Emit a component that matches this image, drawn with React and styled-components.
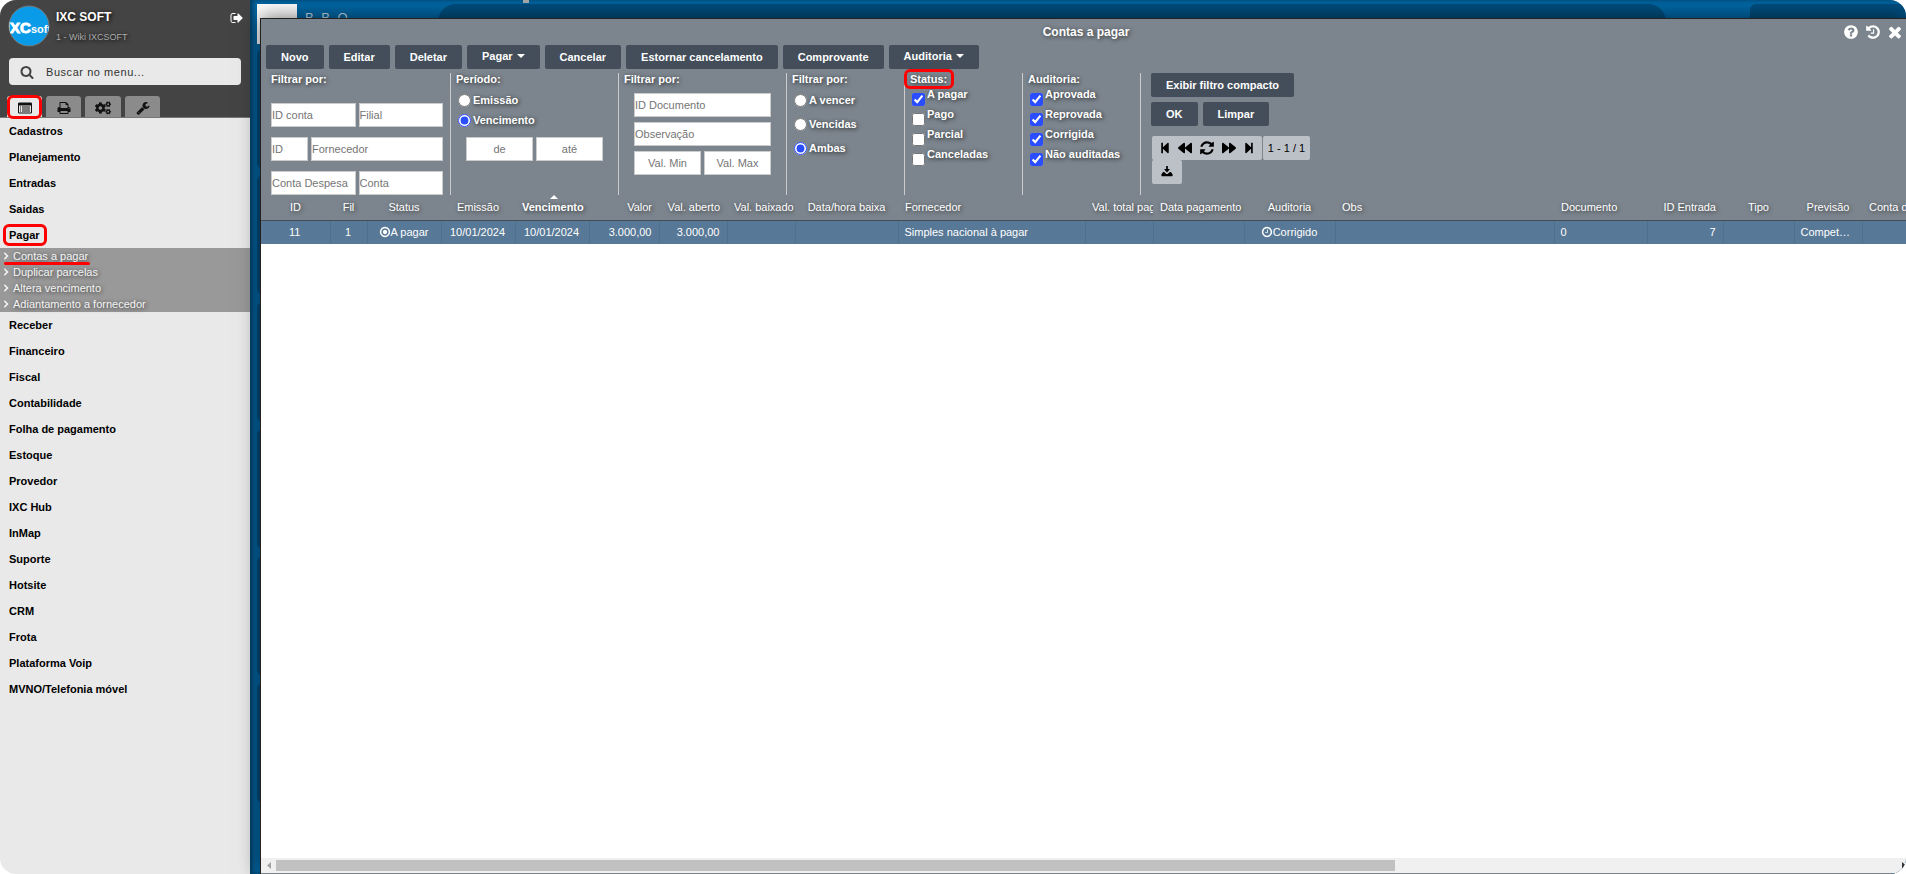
import { useState } from "react";
import styled, { createGlobalStyle, css } from "styled-components";
import { FaCogs, FaStepBackward, FaBackward, FaForward, FaStepForward } from "react-icons/fa";

const GlobalStyle = createGlobalStyle`
  * {
    box-sizing: border-box;
  }
  body {
    margin: 0;
    background: #fff;
  }
  body, button, input, table {
    font-family: "Liberation Sans", Arial, sans-serif;
    font-size: 11px;
  }
  button {
    border: none;
    padding: 0;
    cursor: pointer;
  }
`;

const Page = styled.div`
  display: flex;
  height: 100vh;
  border-radius: 16px;
  overflow: hidden;
`;

/* sidebar */
const Sidebar = styled.aside`
  flex: 0 0 250px;
  background: #e9e9e9;
`;
const SideHead = styled.header`
  background: #444;
  border-bottom: 1px solid #777;
`;
const User = styled.div`
  display: flex;
  height: 58px;
  padding: 5px 6px 0 8px;
  gap: 6px;
`;
const UserText = styled.div`
  flex: 1;
  padding-top: 5px;
`;
const Company = styled.div`
  color: #fff;
  font-size: 12px;
  font-weight: 700;
  line-height: 15px;
  text-shadow: 1px 1px 4px #000;
`;
const Branch = styled.div`
  padding-top: 6px;
  color: #aaa;
  font-size: 9px;
  line-height: 12px;
  text-shadow: 1px 1px 4px #000;
`;
const LogOut = styled.button`
  align-self: flex-start;
  height: 28px;
  background: none;
  color: #fff;
`;
const Search = styled.label`
  display: flex;
  align-items: center;
  gap: 10px;
  height: 27px;
  margin: 0 9px;
  padding: 0 12px 0 11px;
  border-radius: 4px;
  background: #e9e9e9;
  color: #444;
  input {
    flex: 1;
    min-width: 0;
    border: none;
    outline: none;
    background: none;
    letter-spacing: 0.05em;
  }
  input::placeholder {
    color: #333;
  }
`;
const Tabs = styled.nav`
  display: flex;
  gap: 4px;
  padding: 11px 7px 0;
`;
const Tab = styled.button`
  position: relative;
  display: flex;
  align-items: center;
  justify-content: center;
  min-width: 35px;
  height: 21px;
  padding: 2px 10px 0;
  border-radius: 3px 3px 0 0;
  background: ${({ $active }) => ($active ? "#e9e9e9" : "#8b8b8b")};
  color: #111;
`;
const Menu = styled.ul`
  margin: 0;
  padding: 0;
  list-style: none;
`;
const MenuLink = styled.a`
  display: flex;
  align-items: center;
  height: 26px;
  padding-left: 9px;
  color: #000;
  font-weight: 700;
  text-decoration: none;
`;
const SubMenu = styled.ul`
  margin: 0;
  padding: 0;
  list-style: none;
  background: #999;
`;
const SubLink = styled.a`
  display: flex;
  align-items: center;
  gap: 2px;
  height: 16px;
  padding-left: 1px;
  color: #f4f4f4;
  text-decoration: none;
  text-shadow: 1px 1px 4px #333;
`;
const Marked = styled.span`
  position: relative;
`;
/* red outline that sits over a menu entry, a tab or a label */
const Mark = styled.i`
  position: absolute;
  inset: ${({ $inset }) => $inset};
  border: 3px solid #f00;
  border-radius: 6px;
  pointer-events: none;
`;
const Underline = styled.i`
  position: absolute;
  left: -9px;
  right: -2px;
  bottom: -3px;
  height: 3px;
  border-radius: 2px;
  background: #f00;
`;

/* desktop behind the window */
const Desktop = styled.main`
  position: relative;
  display: flex;
  flex: 1;
  min-width: 0;
  padding: 18px 0 0 10px;
`;
const Backdrop = styled.div`
  position: absolute;
  inset: 0;
  overflow: hidden;
  background: #0067a5;
  box-shadow: inset 3px 0 4px rgba(0, 0, 0, 0.4);
`;
const Piece = styled.div`
  position: absolute;
  left: ${({ $left }) => $left}px;
  top: ${({ $top }) => $top}px;
  right: ${({ $right }) => ($right === undefined ? "auto" : `${$right}px`)};
  width: ${({ $width }) => ($width ? `${$width}px` : "auto")};
  height: ${({ $height }) => $height}px;
  border-radius: ${({ $radius = 0 }) => $radius}px;
  background: ${({ $color = "rgba(0, 20, 40, 0.3)" }) => $color};
`;
const BackText = styled.div`
  position: absolute;
  left: 55px;
  top: 10px;
  color: #c8dcea;
  font-size: 13px;
  letter-spacing: 2px;
`;

const Window = styled.section`
  position: relative;
  display: flex;
  flex: 1;
  flex-direction: column;
  min-width: 0;
  border: 1px solid #222;
  border-width: 1px 0 0 1px;
  background: #7c858e;
  box-shadow: 0 0 20px rgba(0, 0, 0, 0.6);
`;
const TitleBar = styled.div`
  display: grid;
  grid-template-columns: 1fr auto 1fr;
  align-items: center;
  height: 26px;
  padding-left: 5px;
  color: #fff;
`;
const Title = styled.h1`
  grid-column: 2;
  margin: 0;
  font-size: 12px;
  text-shadow: 1px 1px 4px #333;
`;
const WindowTools = styled.div`
  display: flex;
  justify-content: flex-end;
`;
const WindowTool = styled.button`
  display: flex;
  align-items: center;
  justify-content: center;
  width: 22px;
  height: 24px;
  background: none;
  color: #fff;
`;
const Toolbar = styled.div`
  display: flex;
  gap: 5px;
  padding: 0 5px;
`;
const Button = styled.button`
  display: flex;
  align-items: center;
  height: 24px;
  padding: 0 15px;
  border-radius: 2px;
  background: #434e5a;
  color: #fff;
  font-weight: 700;
  white-space: nowrap;
  ${({ $menu }) =>
    $menu &&
    css`
      gap: 4px;
      padding-bottom: 2px;
      &::after {
        content: "";
        border: 4px solid transparent;
        border-top-color: #fff;
        border-bottom: none;
      }
    `}
`;

/* filters */
const Filters = styled.div`
  display: flex;
  height: 122px;
  margin-top: 4px;
  color: #fff;
  font-weight: 700;
`;
const Group = styled.fieldset`
  flex: 0 0 ${({ $width }) => $width}px;
  min-width: 0;
  margin: 0;
  padding: 0 7px 0 ${({ $pad = 5 }) => $pad}px;
  border: none;
  border-right: 1px solid #ccc;
`;
const Heading = styled.div`
  width: max-content;
  line-height: 12px;
  text-shadow: 1px 1px 4px #222;
`;
const Fields = styled.div`
  display: flex;
  flex-direction: column;
  gap: ${({ $gap = 5 }) => $gap}px;
  padding: ${({ $top }) => $top}px 8px 0 10px;
  ${({ $wide }) => $wide && "padding-left: 0; padding-right: 0;"}
`;
const FieldRow = styled.div`
  display: grid;
  grid-template-columns: ${({ $cols = "1fr 1fr" }) => $cols};
  gap: 3px;
`;
const Field = styled.input`
  width: 100%;
  min-width: 0;
  height: 24px;
  padding: 0;
  border: 1px solid #ccc;
  background: #fff;
  text-align: ${({ $center }) => ($center ? "center" : "left")};
  &::placeholder {
    color: #757575;
  }
`;
const Options = styled.div`
  padding-top: ${({ $top }) => $top}px;
`;
const Option = styled.label`
  display: flex;
  align-items: ${({ $box }) => ($box ? "flex-end" : "center")};
  gap: 2px;
  height: ${({ $height = 20 }) => $height}px;
  padding: 0 0 ${({ $box }) => ($box ? 1 : 0)}px 2px;
  text-shadow: 1px 1px 4px #222;
  input {
    flex: none;
    width: 13px;
    height: 13px;
    margin: 0;
    accent-color: #2a4dff;
  }
  span {
    align-self: ${({ $box }) => ($box ? "flex-start" : "center")};
    line-height: 14px;
  }
`;
const Actions = styled.div`
  padding-left: 10px;
`;
const ActionRow = styled.div`
  display: flex;
  gap: 5px;
  margin-bottom: 5px;
`;
const Pager = styled.div`
  display: grid;
  grid-template-columns: 110px 47px;
  column-gap: 1px;
  width: max-content;
  padding: 5px 1px 0;
  color: #000;
  font-weight: 400;
`;
const PagerPart = styled.div`
  display: flex;
  align-items: center;
  justify-content: center;
  gap: 7px;
  width: ${({ $width }) => ($width ? `${$width}px` : "auto")};
  height: 24px;
  border-radius: 2px;
  background: #bcc1c8;
  button {
    display: flex;
    background: none;
    color: #000;
  }
`;

/* grid */
const GridArea = styled.div`
  flex: 1;
  min-height: 0;
  overflow: hidden;
  background: #fff;
`;
const Table = styled.table`
  width: 2375px;
  table-layout: fixed;
  border-collapse: collapse;
`;
const HeadCell = styled.th`
  position: relative;
  height: 25px;
  padding: 0 7px;
  overflow: hidden;
  border-bottom: 1px solid #434e5a;
  background: #7c858e;
  color: #fff;
  font-weight: ${({ $sorted }) => ($sorted ? 700 : 400)};
  text-align: ${({ $align }) => $align};
  text-shadow: 1px 1px 4px #333;
  white-space: nowrap;
  ${({ $sorted }) =>
    $sorted &&
    css`
      &::before {
        content: "";
        position: absolute;
        top: 0;
        left: calc(50% - 2px);
        border: 4px solid transparent;
        border-top: none;
        border-bottom-color: #fff;
      }
    `}
`;
const Cell = styled.td`
  height: 24px;
  padding: 0 7px 0 6px;
  overflow: hidden;
  border-right: 1px solid #4f6f8b;
  background: #577896;
  color: #fff;
  text-align: ${({ $align }) => $align};
  text-overflow: ellipsis;
  white-space: nowrap;
  svg {
    vertical-align: -2px;
  }
`;
const ScrollBar = styled.div`
  display: flex;
  align-items: center;
  height: 15px;
  margin-bottom: 1px;
  background: #f0f0f0;
`;
const ScrollArrow = styled.span`
  display: flex;
  flex: 0 0 15px;
  justify-content: ${({ $end }) => ($end ? "flex-end" : "center")};
  color: ${({ $end }) => ($end ? "#333" : "#a3a3a3")};
`;
const ScrollTrack = styled.div`
  flex: 1;
`;
const ScrollThumb = styled.div`
  width: calc(100% * 0.693);
  height: 11px;
  background: #c1c1c1;
`;

const ring =
  "q0 209-103 385.5t-279.5 279.5-385.5 103-385.5-103-279.5-279.5-103-385.5 103-385.5 279.5-279.5 385.5-103 385.5 103 279.5 279.5 103 385.5z";
const paths = {
  signOut:
    "M704 1440q0 4 1 20t.5 26.5-3 23.5-10 19.5-20.5 6.5h-320q-119 0-203.5-84.5t-84.5-203.5v-704q0-119 84.5-203.5t203.5-84.5h320q13 0 22.5 9.5t9.5 22.5q0 4 1 20t.5 26.5-3 23.5-10 19.5-20.5 6.5h-320q-66 0-113 47t-47 113v704q0 66 47 113t113 47h312l11.5 1 11.5 3 8 5.5 7 9 2 13.5zm928-544q0 26-19 45l-544 544q-19 19-45 19t-45-19-19-45v-288h-448q-26 0-45-19t-19-45v-384q0-26 19-45t45-19h448v-288q0-26 19-45t45-19 45 19l544 544q19 19 19 45z",
  search:
    "M1216 832q0-185-131.5-316.5t-316.5-131.5-316.5 131.5-131.5 316.5 131.5 316.5 316.5 131.5 316.5-131.5 131.5-316.5zm512 832q0 52-38 90t-90 38q-54 0-90-38l-343-342q-179 124-399 124-143 0-273.5-55.5t-225-150-150-225-55.5-273.5 55.5-273.5 150-225 225-150 273.5-55.5 273.5 55.5 225 150 150 225 55.5 273.5q0 220-124 399l343 343q37 37 37 90z",
  list: "M160 192h1472q160 0 160 160v1088q0 160-160 160H160q-160 0-160-160V352q0-160 160-160zM128 576v832q0 64 64 64h1408q64 0 64-64V576zM256 704h128v128H256zM512 704h1024v128H512zM256 960h128v128H256zM512 960h1024v128H512zM256 1216h128v128H256zM512 1216h1024v128H512z",
  print:
    "M448 1536h896v-256h-896v256zm0-640h896v-384h-160q-40 0-68-28t-28-68v-160h-640v640zm1152 64q0-26-19-45t-45-19-45 19-19 45 19 45 45 19 45-19 19-45zm128 0v416q0 13-9.5 22.5t-22.5 9.5h-224v160q0 40-28 68t-68 28h-960q-40 0-68-28t-28-68v-160h-224q-13 0-22.5-9.5t-9.5-22.5v-416q0-79 56.5-135.5t135.5-56.5h64v-544q0-40 28-68t68-28h672q40 0 88 20t76 48l152 152q28 28 48 76t20 88v256h64q79 0 135.5 56.5t56.5 135.5z",
  wrench:
    "M448 1472q0-26-19-45t-45-19-45 19-19 45 19 45 45 19 45-19 19-45zm644-420l-682 682q-37 37-90 37-52 0-91-37l-106-108q-38-36-38-90 0-53 38-91l681-681q39 98 114.5 173.5t173.5 114.5zm634-435q0 39-23 106-47 134-164.5 217.5t-258.5 83.5q-185 0-316.5-131.5t-131.5-316.5 131.5-316.5 316.5-131.5q58 0 121.5 16.5t107.5 46.5q16 11 16 28t-16 28l-293 169v224l193 107q5-3 79-48.5t135.5-81 70.5-35.5q15 0 23.5 10t8.5 25z",
  help:
    "M1024 1376v-192q0-14-9-23t-23-9h-192q-14 0-23 9t-9 23v192q0 14 9 23t23 9h192q14 0 23-9t9-23zm256-672q0-88-55.5-163t-138.5-116-170-41q-243 0-371 213-15 24 8 42l132 100q7 6 19 6 16 0 25-12 53-68 86-92 34-24 86-24 48 0 85.5 26t37.5 59q0 38-20 61t-68 45q-63 28-115.5 86.5t-52.5 125.5v36q0 14 9 23t23 9h192q14 0 23-9t9-23q0-19 21.5-49.5t54.5-49.5q32-18 49-28.5t46-35 44.5-48 28-60.5 12.5-81zm384 192" +
    ring,
  history:
    "M1664 896q0 156-61 298t-164 245-245 164-298 61q-172 0-327-72.5t-264-204.5q-7-10-6.5-22.5t8.5-20.5l137-138q10-9 25-9 16 2 23 12 73 95 179 147t225 52q104 0 198.5-40.5t163.5-109.5 109.5-163.5 40.5-198.5-40.5-198.5-109.5-163.5-163.5-109.5-198.5-40.5q-98 0-188 35.5t-160 101.5l137 138q31 30 14 69-17 40-59 40h-448q-26 0-45-19t-19-45v-448q0-42 40-59 39-17 69 14l130 129q107-101 244.5-156.5t284.5-55.5q156 0 298 61t245 164 164 245 61 298zm-640-288v448q0 14-9 23t-23 9h-320q-14 0-23-9t-9-23v-64q0-14 9-23t23-9h224v-352q0-14 9-23t23-9h64q14 0 23 9t9 23z",
  times:
    "M1490 1322q0 40-28 68l-136 136q-28 28-68 28t-68-28l-294-294-294 294q-28 28-68 28t-68-28l-136-136q-28-28-28-68t28-68l294-294-294-294q-28-28-28-68t28-68l136-136q28-28 68-28t68 28l294 294 294-294q28-28 68-28t68 28l136 136q28 28 28 68t-28 68l-294 294 294 294q28 28 28 68z",
  refresh:
    "M1639 1056q0 5-1 7-64 268-268 434.5t-478 166.5q-146 0-282.5-55t-243.5-157l-129 129q-19 19-45 19t-45-19-19-45v-448q0-26 19-45t45-19h448q26 0 45 19t19 45-19 45l-137 137q71 66 161 102t187 36q134 0 250-65t186-179q11-17 53-117 8-23 30-23h192q13 0 22.5 9.5t9.5 22.5zm25-800v448q0 26-19 45t-45 19h-448q-26 0-45-19t-19-45 19-45l138-138q-148-137-349-137-134 0-250 65t-186 179q-11 17-53 117-8 23-30 23h-199q-13 0-22.5-9.5t-9.5-22.5v-7q65-268 270-434.5t480-166.5q146 0 284 55.5t245 156.5l130-129q19-19 45-19t45 19 19 45z",
  clock:
    "M1024 544v448q0 14-9 23t-23 9h-320q-14 0-23-9t-9-23v-64q0-14 9-23t23-9h224v-352q0-14 9-23t23-9h64q14 0 23 9t9 23zm416 352q0-148-73-273t-198-198-273-73-273 73-198 198-73 273 73 273 198 198 273 73 273-73 198-198 73-273zm224 0" +
    ring,
  dot:
    "M1216 896q0 133-94 226t-226 94-226-94-94-226 94-226 226-94 226 94 94 226zm-320-544q-148 0-273 73t-198 198-73 273 73 273 198 198 273 73 273-73 198-198 73-273-73-273-198-198-273-73zm768 544" +
    ring,
  download:
    "M768 0h256v448h320L896 960 448 448h320zM320 896h160l320 288h192l320-288h160l256 320v256q0 64-64 64H128q-64 0-64-64v-256z",
  angle: "M512 384l192-160 640 672-640 672-192-160 448-512z",
};

const Icon = ({ name, size = 14 }) => (
  <svg width={size} height={size} viewBox="0 0 1792 1792" fill="currentColor" fillRule={name === "list" ? "evenodd" : "nonzero"} aria-hidden="true">
    <path d={paths[name]} />
  </svg>
);

const Logo = () => (
  <svg width="42" height="42" viewBox="0 0 42 42" role="img" aria-label="IXC Soft">
    <clipPath id="disc">
      <circle cx="21" cy="21" r="20" />
    </clipPath>
    <circle cx="21" cy="21" r="20" fill="#0a9be8" stroke="#777" strokeWidth="1" />
    <g clipPath="url(#disc)" fill="#fff" stroke="#fff" fontFamily="Liberation Sans, Arial, sans-serif" fontWeight="700">
      <rect x="0" y="17" width="1" height="11" />
      <text x="2" y="28" fontSize="15" strokeWidth="1">XC</text>
      <text x="23" y="28" fontSize="11" strokeWidth="0">soft</text>
    </g>
  </svg>
);

const menu = [
  "Cadastros", "Planejamento", "Entradas", "Saidas", "Pagar", "Receber", "Financeiro", "Fiscal",
  "Contabilidade", "Folha de pagamento", "Estoque", "Provedor", "IXC Hub", "InMap", "Suporte",
  "Hotsite", "CRM", "Frota", "Plataforma Voip", "MVNO/Telefonia móvel",
];
const subMenu = ["Contas a pagar", "Duplicar parcelas", "Altera vencimento", "Adiantamento a fornecedor"];

const buttons = [
  { text: "Novo" },
  { text: "Editar" },
  { text: "Deletar" },
  { text: "Pagar", menu: true },
  { text: "Cancelar" },
  { text: "Estornar cancelamento" },
  { text: "Comprovante" },
  { text: "Auditoria", menu: true },
];

const columns = [
  { title: "ID", width: 69, align: "center", value: "11" },
  { title: "Fil", width: 37, align: "center", value: "1" },
  { title: "Status", width: 74, align: "center", value: "A pagar", icon: "dot" },
  { title: "Emissão", width: 74, align: "center", value: "10/01/2024" },
  { title: "Vencimento", width: 74, align: "center", value: "10/01/2024", sorted: true },
  { title: "Valor", width: 70, align: "right", value: "3.000,00" },
  { title: "Val. aberto", width: 68, align: "right", value: "3.000,00" },
  { title: "Val. baixado", width: 68, align: "right" },
  { title: "Data/hora baixa", width: 103, align: "center" },
  { title: "Fornecedor", width: 187, align: "left", value: "Simples nacional à pagar" },
  { title: "Val. total pago", width: 68, align: "right" },
  { title: "Data pagamento", width: 91, align: "left" },
  { title: "Auditoria", width: 91, align: "center", value: "Corrigido", icon: "clock" },
  { title: "Obs", width: 219, align: "left" },
  { title: "Documento", width: 93, align: "left", value: "0" },
  { title: "ID Entrada", width: 76, align: "right", value: "7" },
  { title: "Tipo", width: 71, align: "center" },
  { title: "Previsão", width: 68, align: "center", value: "Competência" },
  { title: "Conta de despesa", width: 180, align: "left" },
  { title: "", align: "left" },
];

const Radios = ({ name, options, initial, height }) => {
  const [value, setValue] = useState(initial);
  return options.map((text) => (
    <Option key={text} $height={height}>
      <input type="radio" name={name} checked={value === text} onChange={() => setValue(text)} />
      <span>{text}</span>
    </Option>
  ));
};

const Checks = ({ options, checked }) => (
  <Options $top={2}>
    {options.map((text) => (
      <Option key={text} $box>
        <input type="checkbox" defaultChecked={checked.includes(text)} />
        <span>{text}</span>
      </Option>
    ))}
  </Options>
);

const Input = ({ label, center }) => <Field type="text" placeholder={label} aria-label={label} $center={center} />;

const SideMenu = () => (
  <Sidebar>
    <SideHead>
      <User>
        <Logo />
        <UserText>
          <Company>IXC SOFT</Company>
          <Branch>1 - Wiki IXCSOFT</Branch>
        </UserText>
        <LogOut aria-label="Sair">
          <Icon name="signOut" />
        </LogOut>
      </User>
      <Search>
        <Icon name="search" />
        <input type="text" placeholder="Buscar no menu..." aria-label="Buscar no menu" />
      </Search>
      <Tabs>
        <Tab $active aria-label="Menu">
          <Icon name="list" />
          <Mark $inset="-1px 0 -2px 0" />
        </Tab>
        <Tab aria-label="Relatórios">
          <Icon name="print" />
        </Tab>
        <Tab aria-label="Configurações">
          <FaCogs size={16} />
        </Tab>
        <Tab aria-label="Ferramentas">
          <Icon name="wrench" />
        </Tab>
      </Tabs>
    </SideHead>
    <Menu>
      {menu.map((text) => (
        <li key={text}>
          <MenuLink href="#">
            <Marked>
              {text}
              {text === "Pagar" && <Mark $inset="-5px -7px -5px -6px" />}
            </Marked>
          </MenuLink>
          {text === "Pagar" && (
            <SubMenu>
              {subMenu.map((sub, i) => (
                <li key={sub}>
                  <SubLink href="#">
                    <Icon name="angle" size={10} />
                    <Marked>
                      {sub}
                      {i === 0 && <Underline />}
                    </Marked>
                  </SubLink>
                </li>
              ))}
            </SubMenu>
          )}
        </li>
      ))}
    </Menu>
  </Sidebar>
);

const FilterBar = () => (
  <Filters>
    <Group $width={190} $pad={10}>
      <Heading>Filtrar por:</Heading>
      <Fields $top={18} $gap={10} $wide>
        <FieldRow>
          <Input label="ID conta" />
          <Input label="Filial" />
        </FieldRow>
        <FieldRow $cols="37px 1fr">
          <Input label="ID" />
          <Input label="Fornecedor" />
        </FieldRow>
        <FieldRow>
          <Input label="Conta Despesa" />
          <Input label="Conta" />
        </FieldRow>
      </Fields>
    </Group>
    <Group $width={168}>
      <Heading>Período:</Heading>
      <Options $top={5}>
        <Radios name="periodo" options={["Emissão", "Vencimento"]} initial="Vencimento" />
      </Options>
      <Fields $top={7}>
        <FieldRow>
          <Input label="de" center />
          <Input label="até" center />
        </FieldRow>
      </Fields>
    </Group>
    <Group $width={168}>
      <Heading>Filtrar por:</Heading>
      <Fields $top={8}>
        <Input label="ID Documento" />
        <Input label="Observação" />
        <FieldRow>
          <Input label="Val. Min" center />
          <Input label="Val. Max" center />
        </FieldRow>
      </Fields>
    </Group>
    <Group $width={118}>
      <Heading>Filtrar por:</Heading>
      <Options $top={3}>
        <Radios name="prazo" options={["A vencer", "Vencidas", "Ambas"]} initial="Ambas" height={24} />
      </Options>
    </Group>
    <Group $width={118}>
      <Heading>
        <Marked>
          Status:
          <Mark $inset="-4px -7px -4px -6px" />
        </Marked>
      </Heading>
      <Checks options={["A pagar", "Pago", "Parcial", "Canceladas"]} checked={["A pagar"]} />
    </Group>
    <Group $width={118}>
      <Heading>Auditoria:</Heading>
      <Checks
        options={["Aprovada", "Reprovada", "Corrigida", "Não auditadas"]}
        checked={["Aprovada", "Reprovada", "Corrigida", "Não auditadas"]}
      />
    </Group>
    <Actions>
      <ActionRow>
        <Button>Exibir filtro compacto</Button>
      </ActionRow>
      <ActionRow>
        <Button>OK</Button>
        <Button>Limpar</Button>
      </ActionRow>
      <Pager>
        <PagerPart>
          <button aria-label="Primeira"><FaStepBackward size={12} /></button>
          <button aria-label="Anterior"><FaBackward size={14} /></button>
          <button aria-label="Atualizar"><Icon name="refresh" size={16} /></button>
          <button aria-label="Próxima"><FaForward size={14} /></button>
          <button aria-label="Última"><FaStepForward size={12} /></button>
        </PagerPart>
        <PagerPart>1 - 1 / 1</PagerPart>
        <PagerPart $width={30}>
          <button aria-label="Exportar"><Icon name="download" size={12} /></button>
        </PagerPart>
      </Pager>
    </Actions>
  </Filters>
);

const Grid = () => (
  <GridArea>
    <Table>
      <colgroup>
        {columns.map((col) => (
          <col key={col.title} width={col.width} />
        ))}
      </colgroup>
      <thead>
        <tr>
          {columns.map((col) => (
            <HeadCell key={col.title} $align={col.align} $sorted={col.sorted}>
              {col.title}
            </HeadCell>
          ))}
        </tr>
      </thead>
      <tbody>
        <tr>
          {columns.map((col) => (
            <Cell key={col.title} $align={col.align}>
              {col.icon && <Icon name={col.icon} size={12} />}
              {col.value}
            </Cell>
          ))}
        </tr>
      </tbody>
    </Table>
  </GridArea>
);

const App = () => (
  <>
    <GlobalStyle />
    <Page>
      <SideMenu />
      <Desktop>
        <Backdrop>
          <Piece $left={7} $top={4} $width={40} $height={40} $color="#fff" />
          <BackText>B.B.O —</BackText>
          <Piece $left={273} $top={0} $width={6} $height={3} $color="#aaa" />
          <Piece $left={188} $top={4} $right={240} $height={36} $radius={18} />
          <Piece $left={1500} $top={4} $right={0} $height={36} $radius={6} />
          {[49, 175, 302, 429, 556, 683].map((top) => (
            <Piece key={top} $left={7} $top={top} $width={200} $height={120} $radius={6} />
          ))}
        </Backdrop>
        <Window>
          <TitleBar>
            <Title>Contas a pagar</Title>
            <WindowTools>
              <WindowTool aria-label="Ajuda"><Icon name="help" size={16} /></WindowTool>
              <WindowTool aria-label="Histórico"><Icon name="history" size={16} /></WindowTool>
              <WindowTool aria-label="Fechar"><Icon name="times" size={18} /></WindowTool>
            </WindowTools>
          </TitleBar>
          <Toolbar>
            {buttons.map((button) => (
              <Button key={button.text} $menu={button.menu}>
                {button.text}
              </Button>
            ))}
          </Toolbar>
          <FilterBar />
          <Grid />
          <ScrollBar>
            <ScrollArrow>
              <svg width="4" height="7" viewBox="0 0 4 7"><path d="M4 0v7L0 3.5z" fill="currentColor" /></svg>
            </ScrollArrow>
            <ScrollTrack>
              <ScrollThumb />
            </ScrollTrack>
            <ScrollArrow $end>
              <svg width="4" height="7" viewBox="0 0 4 7"><path d="M0 0v7l4-3.5z" fill="currentColor" /></svg>
            </ScrollArrow>
          </ScrollBar>
        </Window>
      </Desktop>
    </Page>
  </>
);

export default App;
